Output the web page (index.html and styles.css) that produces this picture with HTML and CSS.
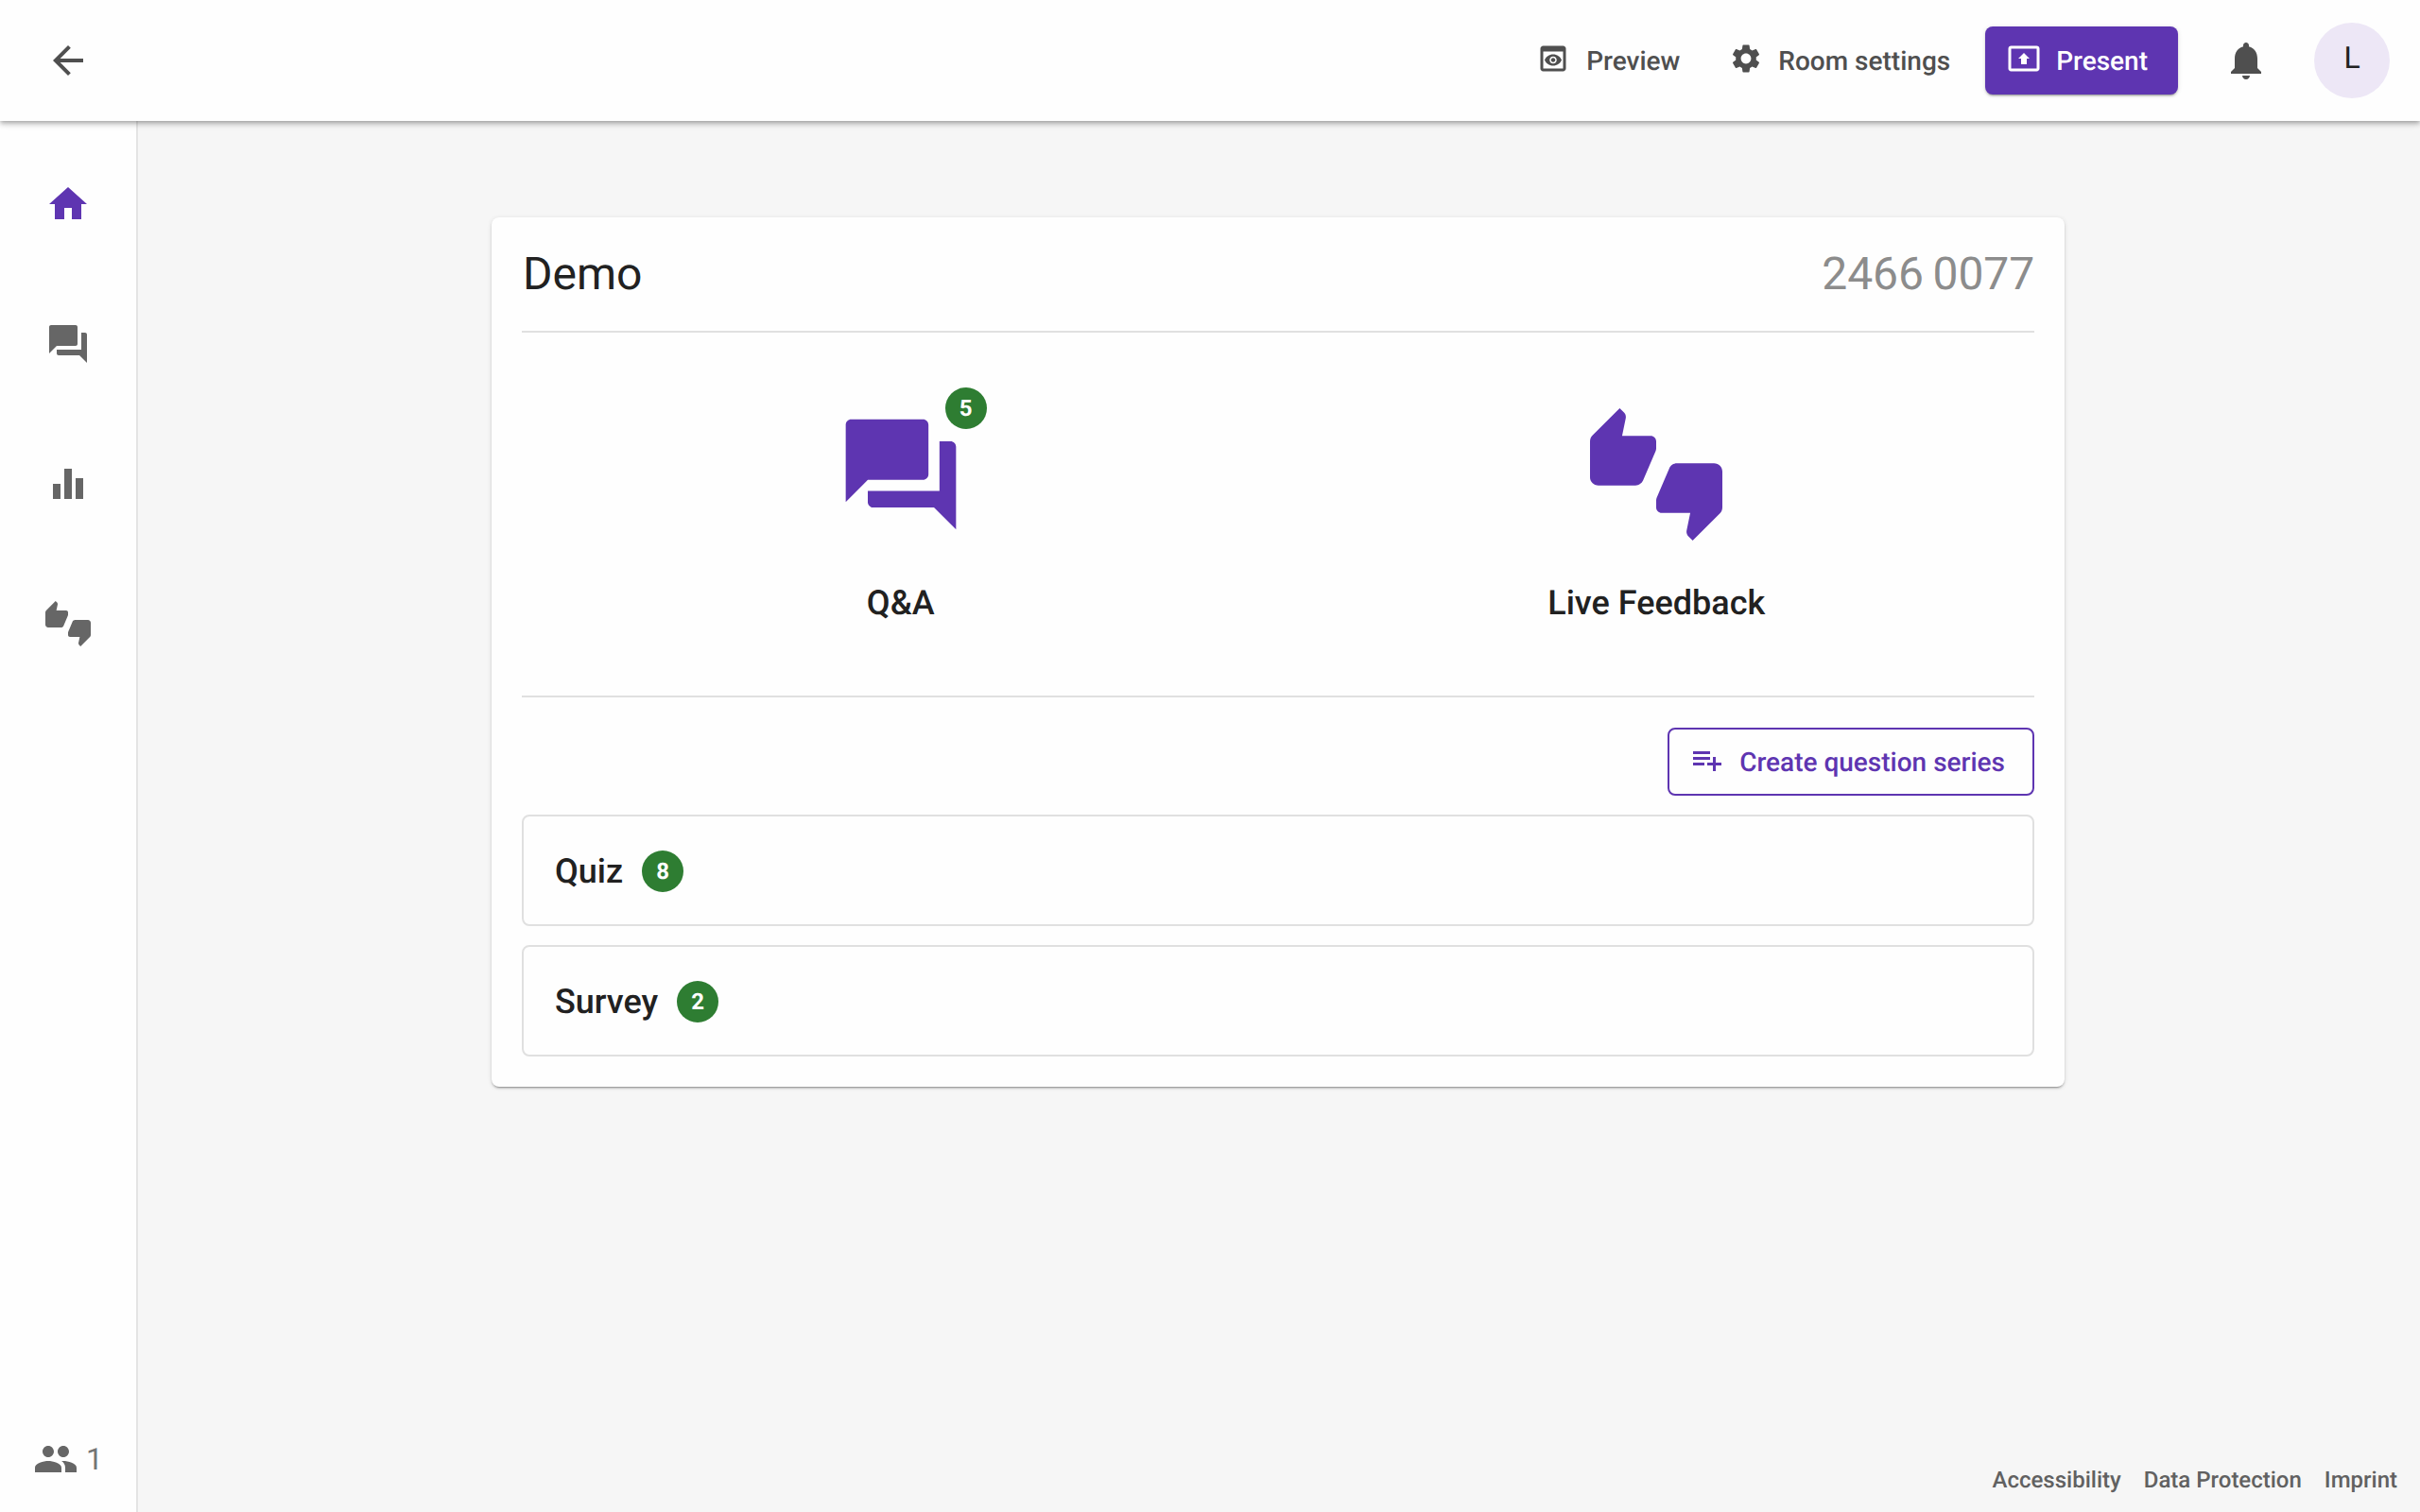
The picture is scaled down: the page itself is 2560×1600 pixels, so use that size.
FILE: index.html
```html
<!DOCTYPE html>
<html lang="en">
<head>
<meta charset="utf-8">
<title>Demo</title>
<link rel="stylesheet" href="styles.css">
</head>
<body>
<header class="topbar">
  <a class="back"><svg class="icon-48 c-header" viewBox="0 0 24 24"><path d="M20 11H7.83l5.59-5.59L12 4l-8 8 8 8 1.41-1.41L7.83 13H20v-2z"/></svg></a>
  <div class="actions">
    <button class="btn btn-text btn-preview"><svg class="icon-36" viewBox="0 0 24 24"><path d="M19 3H5c-1.11 0-2 .9-2 2v14c0 1.1.89 2 2 2h14c1.1 0 2-.9 2-2V5c0-1.1-.89-2-2-2zm0 16H5V7h14v12zm-5.5-6c0 .83-.67 1.5-1.5 1.5s-1.5-.67-1.5-1.5.67-1.5 1.5-1.5 1.5.67 1.5 1.5zM12 9c-2.73 0-5.06 1.66-6 4 .94 2.34 3.27 4 6 4s5.06-1.66 6-4c-.94-2.34-3.27-4-6-4zm0 6.5c-1.38 0-2.5-1.12-2.5-2.5s1.12-2.5 2.5-2.5 2.5 1.12 2.5 2.5-1.12 2.5-2.5 2.5z"/></svg><span>Preview</span></button>
    <button class="btn btn-text"><svg class="icon-36" viewBox="0 0 24 24"><path d="M19.14 12.94c.04-.3.06-.61.06-.94 0-.32-.02-.64-.07-.94l2.03-1.58c.18-.14.23-.41.12-.61l-1.92-3.32c-.12-.22-.37-.29-.59-.22l-2.39.96c-.5-.38-1.03-.7-1.62-.94l-.36-2.54c-.04-.24-.24-.41-.48-.41h-3.84c-.24 0-.43.17-.47.41l-.36 2.54c-.59.24-1.13.57-1.62.94l-2.39-.96c-.22-.08-.47 0-.59.22L2.74 8.87c-.12.21-.08.47.12.61l2.03 1.58c-.05.3-.09.63-.09.94s.02.64.07.94l-2.03 1.58c-.18.14-.23.41-.12.61l1.92 3.32c.12.22.37.29.59.22l2.39-.96c.5.38 1.03.7 1.62.94l.36 2.54c.05.24.24.41.48.41h3.84c.24 0 .44-.17.47-.41l.36-2.54c.59-.24 1.13-.56 1.62-.94l2.39.96c.22.08.47 0 .59-.22l1.92-3.32c.12-.22.07-.47-.12-.61l-2.01-1.58zM12 15.6c-1.98 0-3.6-1.62-3.6-3.6s1.62-3.6 3.6-3.6 3.6 1.62 3.6 3.6-1.62 3.6-3.6 3.6z"/></svg><span>Room settings</span></button>
    <button class="btn btn-primary"><svg class="icon-36" viewBox="0 0 24 24"><path d="M21 3H3c-1.11 0-2 .89-2 2v14c0 1.11.89 2 2 2h18c1.11 0 2-.89 2-2V5c0-1.11-.89-2-2-2zm0 16.02H3V4.98h18v14.04zM10 12H8l4-4 4 4h-2v4h-4v-4z"/></svg><span>Present</span></button>
    <a class="bell"><svg class="icon-48 c-header" viewBox="0 0 24 24"><path d="M12 22c1.1 0 2-.9 2-2h-4c0 1.1.89 2 2 2zm6-6v-5c0-3.07-1.64-5.64-4.5-6.32V4c0-.83-.67-1.5-1.5-1.5s-1.5.67-1.5 1.5v.68C7.63 5.36 6 7.92 6 11v5l-2 2v1h16v-1l-2-2z"/></svg></a>
    <div class="avatar">L</div>
  </div>
</header>
<div class="shell">
  <nav class="sidebar">
    <div class="nav-list">
      <a class="nav-item nav-active"><svg class="icon-48" viewBox="0 0 24 24"><path d="M10 20v-6h4v6h5v-8h3L12 3 2 12h3v8z"/></svg></a>
      <a class="nav-item"><svg class="icon-48" viewBox="0 0 24 24"><path d="M21 6h-2v9H6v2c0 .55.45 1 1 1h11l4 4V7c0-.55-.45-1-1-1zm-4 6V3c0-.55-.45-1-1-1H3c-.55 0-1 .45-1 1v14l4-4h10c.55 0 1-.45 1-1z"/></svg></a>
      <a class="nav-item"><svg class="icon-48" viewBox="0 0 24 24"><path d="M4 12h4v8H4zm6-8h4v16h-4zm6 5h4v11h-4z"/></svg></a>
      <a class="nav-item"><svg class="icon-48" viewBox="0 0 24 24"><path d="M12 6c0-.55-.45-1-1-1H5.82l.66-3.18.02-.23c0-.31-.13-.59-.33-.8L5.38 0 .44 4.94C.17 5.21 0 5.59 0 6v6.5c0 .83.67 1.5 1.5 1.5h6.75c.62 0 1.15-.38 1.38-.91l2.26-5.29c.07-.17.11-.36.11-.55V6zm10.5 4h-6.75c-.62 0-1.15.38-1.38.91l-2.26 5.29c-.07.17-.11.36-.11.55V18c0 .55.45 1 1 1h5.18l-.66 3.18-.02.24c0 .31.13.59.33.8l.79.78 4.94-4.94c.27-.27.44-.65.44-1.06v-6.5c0-.83-.67-1.5-1.5-1.5z"/></svg></a>
    </div>
    <div class="users">
      <svg class="icon-48" viewBox="0 0 24 24"><path d="M16 11c1.66 0 2.99-1.34 2.99-3S17.66 5 16 5c-1.66 0-3 1.34-3 3s1.34 3 3 3zm-8 0c1.66 0 2.99-1.34 2.99-3S9.66 5 8 5C6.34 5 5 6.34 5 8s1.34 3 3 3zm0 2c-2.33 0-7 1.17-7 3.5V19h14v-2.5c0-2.33-4.67-3.5-7-3.5zm8 0c-.29 0-.62.02-.97.05 1.16.84 1.97 1.97 1.97 3.45V19h6v-2.5c0-2.33-4.67-3.5-7-3.5z"/></svg>
      <span>1</span>
    </div>
  </nav>
  <main class="content">
    <section class="card">
      <div class="card-head">
        <h1 class="room-name">Demo</h1>
        <span class="room-code">2466 0077</span>
      </div>
      <div class="features">
        <div class="feature">
          <div class="feature-icon">
            <svg class="icon-140" viewBox="0 0 24 24"><path d="M21 6h-2v9H6v2c0 .55.45 1 1 1h11l4 4V7c0-.55-.45-1-1-1zm-4 6V3c0-.55-.45-1-1-1H3c-.55 0-1 .45-1 1v14l4-4h10c.55 0 1-.45 1-1z"/></svg>
            <span class="badge badge-corner">5</span>
          </div>
          <div class="feature-label">Q&amp;A</div>
        </div>
        <div class="feature">
          <div class="feature-icon">
            <svg class="icon-140" viewBox="0 0 24 24"><path d="M12 6c0-.55-.45-1-1-1H5.82l.66-3.18.02-.23c0-.31-.13-.59-.33-.8L5.38 0 .44 4.94C.17 5.21 0 5.59 0 6v6.5c0 .83.67 1.5 1.5 1.5h6.75c.62 0 1.15-.38 1.38-.91l2.26-5.29c.07-.17.11-.36.11-.55V6zm10.5 4h-6.75c-.62 0-1.15.38-1.38.91l-2.26 5.29c-.07.17-.11.36-.11.55V18c0 .55.45 1 1 1h5.18l-.66 3.18-.02.24c0 .31.13.59.33.8l.79.78 4.94-4.94c.27-.27.44-.65.44-1.06v-6.5c0-.83-.67-1.5-1.5-1.5z"/></svg>
          </div>
          <div class="feature-label">Live Feedback</div>
        </div>
      </div>
      <div class="series-bar">
        <button class="btn btn-outline"><svg class="icon-36" viewBox="0 0 24 24"><path d="M14 10H2v2h12v-2zm0-4H2v2h12V6zm4 8v-4h-2v4h-4v2h4v4h2v-4h4v-2h-4zM2 16h8v-2H2v2z"/></svg><span>Create question series</span></button>
      </div>
      <div class="panels">
        <div class="panel"><span class="panel-title">Quiz</span><span class="badge">8</span></div>
        <div class="panel"><span class="panel-title">Survey</span><span class="badge">2</span></div>
      </div>
    </section>
    <footer class="footer">
      <a>Accessibility</a>
      <a>Data Protection</a>
      <a>Imprint</a>
    </footer>
  </main>
</div>
</body>
</html>
```
FILE: styles.css
```css
* { box-sizing: border-box; }
html, body { height: 100%; }
body {
  margin: 0;
  display: flex;
  flex-direction: column;
  overflow: hidden;
  background: #f6f6f6;
  color: #212121;
  font-family: Roboto, "Noto Sans", sans-serif;
  text-rendering: geometricPrecision;
}
svg { fill: currentColor; display: block; flex: none; }
.icon-36 { width: 36px; height: 36px; margin-bottom: 4px; }
.icon-48 { width: 48px; height: 48px; }
.icon-140 { width: 140px; height: 140px; }
.c-header { color: #4f4f4f; }

.topbar {
  position: relative;
  z-index: 2;
  flex: none;
  height: 128px;
  padding: 0 32px 0 48px;
  display: flex;
  align-items: center;
  justify-content: space-between;
  background: #fefefe;
  box-shadow: 0 2px 4px -1px rgba(0,0,0,.2), 0 4px 5px 0 rgba(0,0,0,.14), 0 1px 10px 0 rgba(0,0,0,.12);
}
.back { display: block; }
.actions { display: flex; align-items: center; }
.btn {
  display: flex;
  align-items: center;
  gap: 16px;
  height: 72px;
  padding: 0 32px 0 24px;
  border: 0;
  border-radius: 8px;
  background: transparent;
  font: 500 28px Roboto, sans-serif;
  text-rendering: geometricPrecision;
}
.btn-text { color: #4f4f4f; }
.btn-preview { gap: 17px; margin-right: -4px; }
.btn-primary {
  margin-left: 5px;
  margin-right: 32px;
  padding-left: 23px;
  background: #5e35b1;
  color: #fff;
  box-shadow: 0 3px 1px -2px rgba(0,0,0,.2), 0 2px 2px 0 rgba(0,0,0,.14), 0 1px 5px 0 rgba(0,0,0,.12);
}
.bell {
  width: 80px;
  height: 80px;
  display: flex;
  align-items: center;
  justify-content: center;
  margin-right: 32px;
}
.avatar {
  width: 80px;
  height: 80px;
  border-radius: 50%;
  display: flex;
  align-items: center;
  justify-content: center;
  background: #ede7f6;
  font-size: 32px;
  padding-bottom: 6px;
}

.shell { flex: 1; display: flex; min-height: 0; }
.sidebar {
  position: relative;
  z-index: 1;
  flex: none;
  width: 144px;
  display: flex;
  flex-direction: column;
  justify-content: space-between;
  background: #fefefe;
  box-shadow: 2px 0 0 #e4e4e4;
}
.nav-list { padding-top: 14px; }
.nav-item {
  height: 148px;
  display: flex;
  align-items: center;
  justify-content: center;
  color: #666;
}
.nav-active { color: #5e35b1; }
.users {
  display: flex;
  align-items: center;
  gap: 8px;
  padding: 0 0 32px 35px;
  color: #666;
  font-size: 32px;
  line-height: 48px;
}
.users span { color: #757575; }

.content {
  flex: 1;
  min-width: 0;
  display: flex;
  flex-direction: column;
  align-items: center;
  padding-top: 102px;
}
.card {
  width: 1664px;
  padding: 0 32px 32px;
  border-radius: 8px;
  background: #fefefe;
  box-shadow: 0 3px 1px -2px rgba(0,0,0,.2), 0 2px 2px 0 rgba(0,0,0,.14), 0 1px 5px 0 rgba(0,0,0,.12);
}
.card-head {
  height: 122px;
  display: flex;
  align-items: center;
  justify-content: space-between;
  border-bottom: 2px solid #e0e0e0;
  padding: 0 0 1px 1px;
}
.room-name { margin: 0; font-size: 48px; font-weight: 400; }
.room-code { font-size: 48px; color: #8c8c8c; word-spacing: -2px; letter-spacing: -.12px; }
.features {
  height: 386px;
  display: grid;
  grid-template-columns: 1fr 1fr;
  border-bottom: 2px solid #e0e0e0;
  padding: 80px 0 0 1px;
}
.feature { display: flex; flex-direction: column; align-items: center; }
.feature-icon { position: relative; color: #5e35b1; }
.feature-label { margin-top: 42px; font-size: 36px; line-height: 48px; font-weight: 500; }
.badge {
  width: 44px;
  height: 44px;
  border-radius: 50%;
  display: inline-flex;
  align-items: center;
  justify-content: center;
  background: #2e7d32;
  color: #fff;
  font-size: 24px;
  font-weight: 700;
}
.badge-corner { position: absolute; top: -22px; right: -21px; }
.series-bar { display: flex; justify-content: flex-end; padding: 32px 0 20px; }
.btn-outline {
  border: 2px solid #5e35b1;
  color: #5e35b1;
  gap: 16px;
  padding: 0 29px 0 22px;
}
.panels { display: flex; flex-direction: column; gap: 20px; }
.panel {
  height: 118px;
  display: flex;
  align-items: center;
  gap: 20px;
  padding: 2px 0 0 33px;
  border: 2px solid #e0e0e0;
  border-radius: 8px;
}
.panel-title { font-size: 36px; font-weight: 500; }
.panel .badge { margin-bottom: 1px; }

.footer {
  margin-top: auto;
  align-self: flex-end;
  display: flex;
  gap: 24px;
  padding: 0 24px 17px 0;
  color: #616161;
  font-size: 24px;
  font-weight: 500;
  line-height: 34px;
}
```
